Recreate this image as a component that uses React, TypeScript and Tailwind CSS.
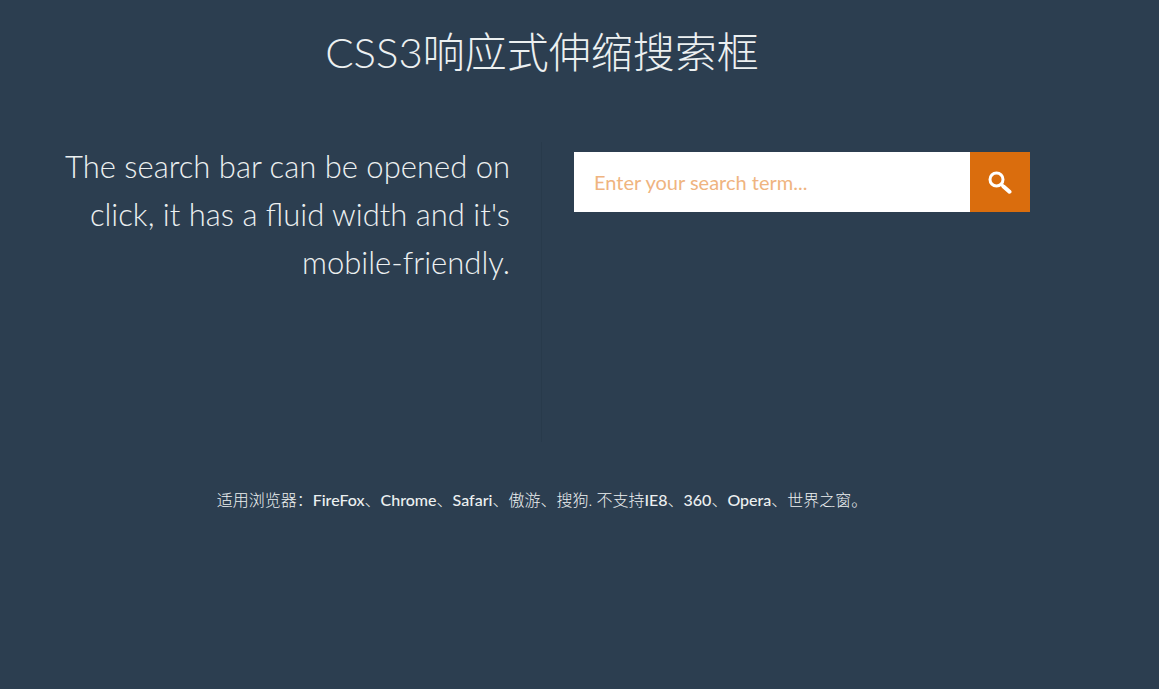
import { useState } from "react";

const title = "CSS3响应式伸缩搜索框";
const intro =
  "The search bar can be opened on click, it has a fluid width and it's mobile-friendly.";
const browsers =
  "适用浏览器：FireFox、Chrome、Safari、傲游、搜狗. 不支持IE8、360、Opera、世界之窗。";

function SearchIcon() {
  return (
    <svg viewBox="0 0 24 24" className="h-6 w-6" fill="none" stroke="currentColor" aria-hidden="true">
      <circle cx="8.5" cy="9.5" r="6.5" strokeWidth="3" />
      <path d="M13 14l2.5 2.5" strokeWidth="3" />
      <path d="M15.5 16.5l6 5.2" strokeWidth="4" strokeLinecap="round" />
    </svg>
  );
}

function SearchBar() {
  const [term, setTerm] = useState("");

  return (
    <form
      role="search"
      onSubmit={(e) => e.preventDefault()}
      className="flex h-[60px] w-full"
    >
      <input
        type="text"
        value={term}
        onChange={(e) => setTerm(e.target.value)}
        aria-label="Search term"
        placeholder="Enter your search term..."
        className="min-w-0 flex-1 bg-white px-5 text-xl text-[#2c3e50] outline-none placeholder:text-[#efb480]"
      />
      <button
        type="submit"
        aria-label="Search"
        className="flex w-[60px] shrink-0 cursor-pointer items-center justify-center bg-[#da6d0d] text-white"
      >
        <SearchIcon />
      </button>
    </form>
  );
}

export default function App() {
  return (
    <div className="min-h-screen bg-[#2c3e50] pr-[75px] font-['Lato','Noto_Sans_CJK_SC',sans-serif] text-[#ecf0f1]">
      <header className="px-8 pt-[25px] text-center">
        <h1 className="text-[42px] leading-[55px] font-light">{title}</h1>
      </header>

      <main className="mx-auto mt-[62px] grid max-w-[1040px] grid-cols-2">
        <div className="min-h-[300px] border-r border-[#283a4b] pr-[31px] pl-8 text-right">
          <p className="text-[31px] leading-[48px] font-light">{intro}</p>
        </div>
        <div className="px-8 pt-[10px]">
          <SearchBar />
        </div>
      </main>

      <footer className="mt-[46px] px-8 text-center">
        <p className="text-base leading-6 font-light">
          {/* browser names stand out against the lighter Chinese text */}
          {browsers.split(/([A-Za-z0-9]+)/).map((part, i) =>
            i % 2 === 1 ? (
              <span key={i} className="font-medium">
                {part}
              </span>
            ) : (
              part
            )
          )}
        </p>
      </footer>
    </div>
  );
}
